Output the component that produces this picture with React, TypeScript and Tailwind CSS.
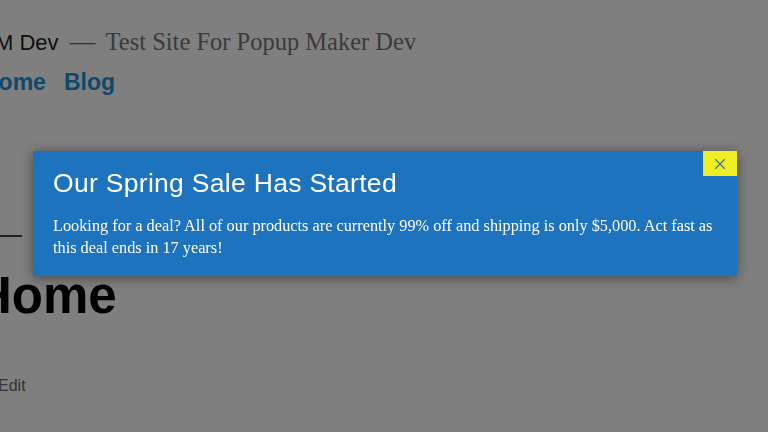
import { X } from 'lucide-react'

const sans = "font-['Liberation_Sans',Arial,sans-serif]"
const serif = "font-['Liberation_Serif','Times_New_Roman',serif]"

function SitePage() {
  return (
    <div className="min-h-screen w-full overflow-hidden bg-white">
      <div className="-ml-[5px] pt-[24px]">
        {/* Site branding */}
        <div className="flex items-baseline">
          <span className={`${sans} text-[22px] text-[#222]`}>M Dev</span>
          <span className={`${serif} ml-[11px] text-[26px] leading-none text-[#666]`}>—</span>
          <span className={`${serif} ml-[10px] text-[24.5px] text-[#767676]`}>Test Site For Popup Maker Dev</span>
        </div>

        {/* Navigation */}
        <nav className={`${sans} -ml-[13px] mt-[4px] flex gap-[18px] text-[23px] font-bold text-[#1b92d8]`}>
          <span>Home</span>
          <span>Blog</span>
        </nav>

        {/* Separator */}
        <div className="mt-[136px] -ml-[40px] h-[2px] w-[67px] bg-[#444]" />

        {/* Page title */}
        <h1 className={`${sans} -ml-[20px] mt-[33px] text-[51px] font-bold leading-none text-black`}>Home</h1>

        <div className={`${sans} ml-[3px] mt-[53px] text-[16px] text-[#666]`}>Edit</div>
      </div>
    </div>
  )
}

function SalePopup() {
  return (
    <div className="fixed inset-0 flex justify-center bg-black/50 pl-[2px] pt-[151px]">
      <div className="relative h-[125px] w-[704px] bg-[#1e73be] px-[20px] pt-[15px] shadow-[0_2px_12px_rgba(0,0,0,0.45)]">
        <button className="absolute right-0 top-0 flex h-[25px] w-[34px] items-center justify-center bg-[#eeee22] text-[#3d6f9c]">
          <X size={18} strokeWidth={1.5} />
        </button>
        <h2 className={`${sans} text-[26.5px] leading-[34px] tracking-[0.3px] text-white`}>Our Spring Sale Has Started</h2>
        <p className={`${serif} mt-[15px] text-[16.3px] leading-[22px] text-white`}>
          Looking for a deal? All of our products are currently 99% off and shipping is only $5,000. Act fast as this
          deal ends in 17 years!
        </p>
      </div>
    </div>
  )
}

export default function App() {
  return (
    <div className="relative">
      <SitePage />
      <SalePopup />
    </div>
  )
}
